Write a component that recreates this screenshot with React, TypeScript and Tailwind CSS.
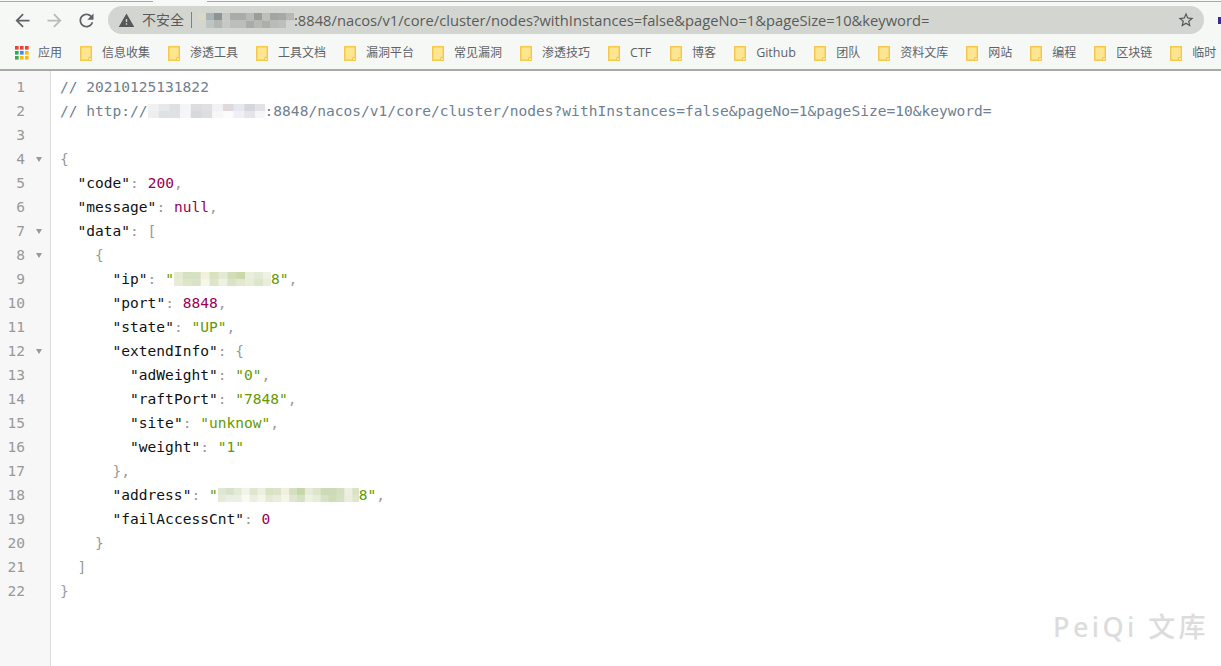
import React from "react";

const Folder = () => (
  <svg width="12" height="15" viewBox="0 0 12 15" className="shrink-0">
    <path d="M.75.75h10.5v13.5H.75z" fill="#fee591" stroke="#f2ca50" strokeWidth="1.5" />
    <path d="M8.5 11.5h3v3h-3z" fill="#fee591" stroke="#f2ca50" />
  </svg>
);

const Apps = () => {
  const c = ["#ea4335", "#ea4335", "#ea4335", "#34a853", "#4285f4", "#fbbc05", "#34a853", "#fbbc05", "#fbbc05"];
  return (
    <svg width="14" height="14" viewBox="0 0 14 14" className="shrink-0">
      {c.map((f, i) => (
        <rect key={i} x={(i % 3) * 5} y={Math.floor(i / 3) * 5} width="3.6" height="3.6" fill={f} />
      ))}
    </svg>
  );
};

const Mosaic = ({ w, rows, cell = 8, h = 14 }: { w: number; rows: string[][]; cell?: number; h?: number }) => (
  <svg width={w} height={h} viewBox={`0 0 ${w} ${h}`} className="inline-block align-[-2px] shrink-0">
    {rows.map((r, y) =>
      r.map((f, x) => (
        <rect key={`${x}-${y}`} x={x * cell} y={(y * h) / rows.length} width={cell + 0.5} height={h / rows.length} fill={f} />
      ))
    )}
  </svg>
);

const urlRows = [
  ["#dcd8c8", "#a9b3b5", "#8f9394", "#c4c8c1", "#a8aba7", "#a8aba7", "#b8bbb5", "#9a9d9a", "#bcc0b9", "#a2a5a1", "#a5a8a4", "#b5b8b3"],
  ["#d2d5d0", "#bfc5c5", "#b2b6b5", "#c6c9c3", "#bbbeb9", "#bbbeb9", "#a9aca8", "#b6b9b4", "#adb0aa", "#b9bcb6", "#bdc0ba", "#d2d5d0"],
];
const commentRows = [
  ["#f0f1f3", "#e6e8ec", "#dfe0e4", "#f4f5f6", "#dcdde1", "#e0e0e4", "#f2f2f4", "#e0d9da", "#e4e9f1", "#d6d7dd", "#e2e2e7"],
  ["#eeeeF0", "#dfe0e4", "#e0e1e5", "#f6f6f7", "#d7d8dd", "#dddee2", "#f7f7f8", "#fbfbfb", "#eef0f5", "#e4e4e9", "#f6f6f8"],
];
const ipRows = [
  ["#e4ebd2", "#d6e1c2", "#d6e1c4", "#f1f2de", "#d8e2bc", "#e2ead3", "#d2dfb6", "#c9d9a9", "#e9eedd", "#e2e9d4", "#eef2e4"],
  ["#e6ecd6", "#dee6ca", "#dae2c8", "#f5f7ea", "#dde5c8", "#eef2e2", "#dae3c6", "#e2e8d2", "#e8eddb", "#dde5cb", "#e9eedc"],
];
const addrRows = [
  ["#dfe7d3", "#d7e2ca", "#e4ead6", "#f2f4e8", "#deE6cd", "#edf0e0", "#d8e3c2", "#dbe4ca", "#f3efe0", "#d3e0bf", "#c6d6aa", "#e6ebda", "#dde5cd", "#ccdab5", "#cddaB8", "#d4dfc0", "#eceFe2", "#d8e2c4"],
  ["#e4ebd8", "#eaefe4", "#eaefe2", "#f9faf3", "#eaefe0", "#f4f6ec", "#e4ead5", "#e9eddd", "#f6f5ea", "#e0e7d0", "#d6e1c4", "#edf1e4", "#e8edda", "#d7e2c2", "#cfdcb8", "#d6e1c2", "#eaeede", "#dee6cc"],
];

type T = "p" | "k" | "s" | "n" | "c";
const cls: Record<T, string> = {
  p: "text-[#999999]",
  k: "text-[#111111]",
  s: "text-[#669900]",
  n: "text-[#990055]",
  c: "text-[#708090]",
};
const S = ({ t, children }: { t: T; children: React.ReactNode }) => <span className={cls[t]}>{children}</span>;

const Kv = ({ k, v, t, comma }: { k: string; v: string; t: T; comma?: boolean }) => (
  <>
    <S t="k">"{k}"</S>
    <S t="p">: </S>
    <S t={t}>{v}</S>
    {comma && <S t="p">,</S>}
  </>
);

const lines: { fold?: boolean; node: React.ReactNode }[] = [
  { node: <S t="c">// 20210125131822</S> },
  {
    node: (
      <S t="c">
        // http://
        <Mosaic w={117} rows={commentRows} cell={10.7} />
        :8848/nacos/v1/core/cluster/nodes?withInstances=false&amp;pageNo=1&amp;pageSize=10&amp;keyword=
      </S>
    ),
  },
  { node: "" },
  { fold: true, node: <S t="p">{"{"}</S> },
  { node: <>{"  "}<Kv k="code" v="200" t="n" comma /></> },
  { node: <>{"  "}<Kv k="message" v="null" t="n" comma /></> },
  { fold: true, node: <>{"  "}<S t="k">"data"</S><S t="p">: [</S></> },
  { fold: true, node: <>{"    "}<S t="p">{"{"}</S></> },
  {
    node: (
      <>
        {"      "}
        <S t="k">"ip"</S>
        <S t="p">: </S>
        <S t="s">"</S>
        <Mosaic w={97} rows={ipRows} cell={8.9} />
        <S t="s">8"</S>
        <S t="p">,</S>
      </>
    ),
  },
  { node: <>{"      "}<Kv k="port" v="8848" t="n" comma /></> },
  { node: <>{"      "}<Kv k="state" v={'"UP"'} t="s" comma /></> },
  { fold: true, node: <>{"      "}<S t="k">"extendInfo"</S><S t="p">: {"{"}</S></> },
  { node: <>{"        "}<Kv k="adWeight" v={'"0"'} t="s" comma /></> },
  { node: <>{"        "}<Kv k="raftPort" v={'"7848"'} t="s" comma /></> },
  { node: <>{"        "}<Kv k="site" v={'"unknow"'} t="s" comma /></> },
  { node: <>{"        "}<Kv k="weight" v={'"1"'} t="s" /></> },
  { node: <>{"      "}<S t="p">{"},"}</S></> },
  {
    node: (
      <>
        {"      "}
        <S t="k">"address"</S>
        <S t="p">: </S>
        <S t="s">"</S>
        <Mosaic w={141} rows={addrRows} cell={7.9} />
        <S t="s">8"</S>
        <S t="p">,</S>
      </>
    ),
  },
  { node: <>{"      "}<Kv k="failAccessCnt" v="0" t="n" /></> },
  { node: <>{"    "}<S t="p">{"}"}</S></> },
  { node: <>{"  "}<S t="p">]</S></> },
  { node: <S t="p">{"}"}</S> },
];

const bookmarks: { t: string; c?: string }[] = [
  { t: "信息收集" },
  { t: "渗透工具" },
  { t: "工具文档" },
  { t: "漏洞平台" },
  { t: "常见漏洞" },
  { t: "渗透技巧" },
  { t: "CTF", c: "w-[22px] text-[12.5px]" },
  { t: "博客" },
  { t: "Github", c: "w-[40px] text-[12.5px]" },
  { t: "团队" },
  { t: "资料文库" },
  { t: "网站" },
  { t: "编程" },
  { t: "区块链" },
  { t: "临时" },
];

export default function App() {
  return (
    <div className="relative h-[666px] w-full overflow-hidden bg-white font-['Open_Sans','Noto_Sans_CJK_SC',sans-serif]">
      <div className="h-[71px] border-b-[2px] border-[#a9aaa6] bg-[#f6f8f6]">
        <div className="flex h-[2px] pt-px">
          <div className="h-px w-[153px] bg-[#a9aaa6]" />
          <div className="w-[54px]" />
          <div className="h-px flex-1 bg-[#a9aaa6]" />
        </div>
        <div className="mt-1 flex h-[28px] items-center">
          <svg width="21" height="21" viewBox="0 0 24 24" className="ml-[12px] fill-[#5f6368]">
            <path d="M20 11H7.83l5.59-5.59L12 4l-8 8 8 8 1.41-1.41L7.83 13H20v-2z" />
          </svg>
          <svg width="21" height="21" viewBox="0 0 24 24" className="ml-[11px] fill-[#b8bab8]">
            <path d="M12 4l-1.41 1.41L16.17 11H4v2h12.17l-5.58 5.59L12 20l8-8z" />
          </svg>
          <svg width="21" height="21" viewBox="0 0 24 24" className="ml-[11px] fill-[#5f6368]">
            <path d="M17.65 6.35C16.2 4.9 14.21 4 12 4c-4.42 0-7.99 3.58-7.99 8s3.57 8 7.99 8c3.73 0 6.84-2.55 7.73-6h-2.08c-.82 2.33-3.04 4-5.65 4-3.31 0-6-2.69-6-6s2.69-6 6-6c1.66 0 3.14.69 4.22 1.78L13 11h7V4l-2.35 2.35z" />
          </svg>
          <div className="ml-[11px] flex h-[28px] w-[1096px] items-center rounded-full bg-[#d2d5d0] pl-[10px] pr-[9px] text-[14px] text-[#5a5c5a]">
            <svg width="17" height="17" viewBox="0 0 24 24" className="shrink-0 fill-[#55575a]">
              <path d="M1 21h22L12 2 1 21zm12-3h-2v-2h2v2zm0-4h-2v-4h2v4z" />
            </svg>
            <span className="ml-[7px] text-[14px] leading-none">不安全</span>
            <span className="ml-[7px] h-[16px] w-px bg-[#7f817f]" />
            <span className="ml-[6px] flex">
              <Mosaic w={96} h={15} rows={urlRows} />
            </span>
            <span className="whitespace-nowrap text-[14.73px] leading-none">:8848/nacos/v1/core/cluster/nodes?withInstances=false&amp;pageNo=1&amp;pageSize=10&amp;keyword=</span>
            <svg width="18" height="18" viewBox="0 0 24 24" className="ml-auto shrink-0 fill-[#55575a]">
              <path d="M22 9.24l-7.19-.62L12 2 9.19 8.63 2 9.24l5.46 4.73L5.82 21 12 17.27 18.18 21l-1.63-7.03L22 9.24zM12 15.4l-3.76 2.27 1-4.28-3.32-2.88 4.38-.38L12 6.1l1.71 4.04 4.38.38-3.32 2.88 1 4.28L12 15.4z" />
            </svg>
          </div>
          <div className="ml-[14px] h-[7px] w-[3px] bg-[#3b2a9a]" />
        </div>
        <div className="mt-[10px] flex h-[18px] items-center overflow-hidden whitespace-nowrap pl-[15px] text-[12px] leading-none text-[#5f6368]">
          <Apps />
          <span className="ml-[9px] mr-[18px]">应用</span>
          {bookmarks.map((b) => (
            <div key={b.t} className="mr-[18px] flex shrink-0 items-center gap-[10px]">
              <Folder />
              <span className={b.c}>{b.t}</span>
            </div>
          ))}
        </div>
      </div>
      <div className="flex h-[595px] font-['DejaVu_Sans_Mono','Noto_Sans_CJK_SC',monospace] text-[14.56px] leading-6">
        <div className="w-[51px] shrink-0 border-r border-[#dddddd] bg-[#f7f7f7] pt-1 text-[#999999]">
          {lines.map((l, i) => (
            <div key={i} className="flex h-6 items-center">
              <span className="w-[25px] text-right">{i + 1}</span>
              {l.fold && (
                <svg width="6" height="6" viewBox="0 0 6 6" className="ml-[11px]">
                  <path d="M0 1h6L3 6z" fill="#999999" />
                </svg>
              )}
            </div>
          ))}
        </div>
        <div className="flex-1 whitespace-pre pl-[9px] pt-1">
          {lines.map((l, i) => (
            <div key={i} className="h-6">
              {l.node}
            </div>
          ))}
        </div>
      </div>
      <div className="absolute right-[12px] top-[609px] whitespace-nowrap font-['Noto_Sans','Noto_Sans_CJK_SC',sans-serif] text-[27px] font-medium leading-9 tracking-[3.4px] text-[#dcdcdc]">
        PeiQi 文库
      </div>
    </div>
  );
}
